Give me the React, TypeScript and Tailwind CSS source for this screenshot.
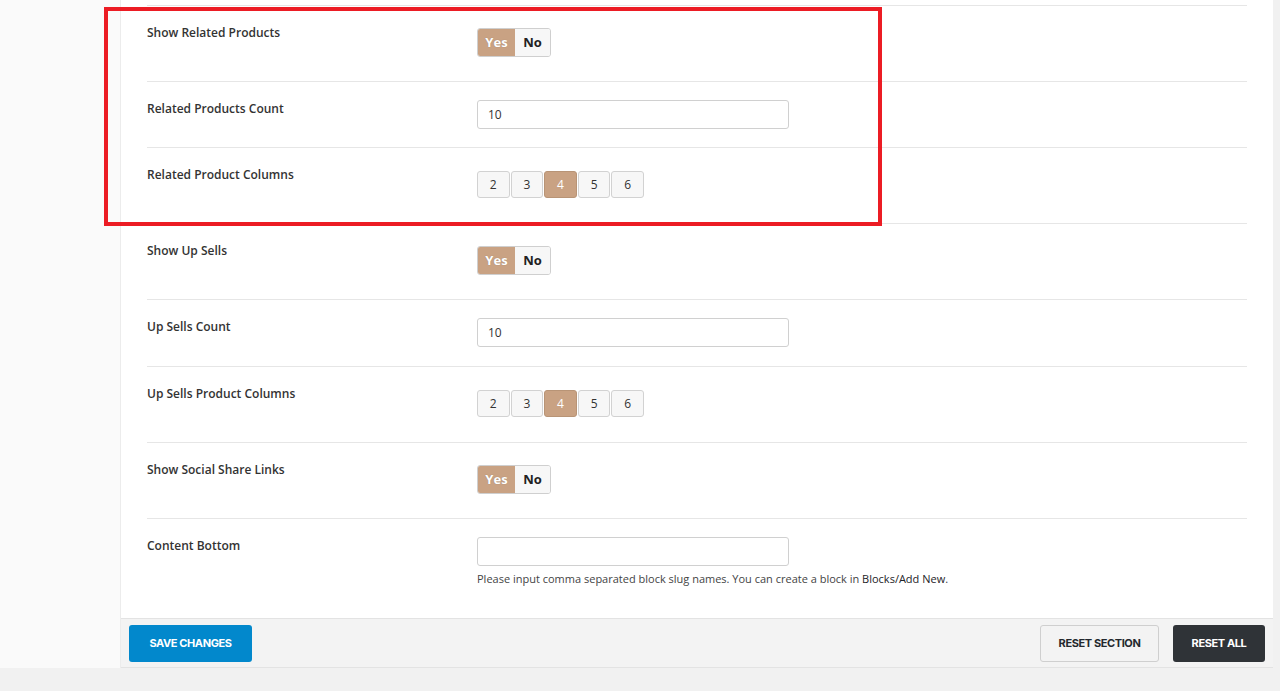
import React from "react";

const labelCls =
  "w-[330px] shrink-0 text-[12px] leading-[18px] font-semibold text-[#333] [font-family:'Open_Sans',sans-serif]";

function Toggle() {
  return (
    <div className="mt-[4px] flex h-[29px] w-fit overflow-hidden rounded-[3px] border border-[#cfcfcf] text-[13px] font-bold [font-family:'Open_Sans',sans-serif]">
      <div className="flex w-[37px] items-center justify-center bg-[#c9a283] text-white [text-shadow:0_0_1px_rgba(0,0,0,0.25)]">
        Yes
      </div>
      <div className="flex w-[35px] items-center justify-center bg-[#f7f7f7] text-[#222]">
        No
      </div>
    </div>
  );
}

function Columns() {
  const nums = [2, 3, 4, 5, 6];
  return (
    <div className="mt-[5px] flex gap-[1px] text-[12px] [font-family:'Open_Sans',sans-serif]">
      {nums.map((n) =>
        n === 4 ? (
          <div
            key={n}
            className="flex h-[27px] w-[32.6px] items-center justify-center rounded-[3px] border border-[#b89476] bg-[#c9a283] text-white"
          >
            {n}
          </div>
        ) : (
          <div
            key={n}
            className="flex h-[27px] w-[32.6px] items-center justify-center rounded-[3px] border border-[#d2d2d2] bg-[#f7f7f7] text-[#333]"
          >
            {n}
          </div>
        )
      )}
    </div>
  );
}

function TextInput({ value }: { value: string }) {
  return (
    <div className="flex h-[29px] w-[312px] items-center rounded-[3px] border border-[#d0d0d0] bg-white px-[10px] text-[12px] text-[#333] [font-family:'Open_Sans',sans-serif]">
      {value}
    </div>
  );
}

function Row({
  label,
  h,
  children,
}: {
  label: string;
  h: string;
  children: React.ReactNode;
}) {
  return (
    <div className={`flex border-t border-[#e6e6e6] pt-[18px] ${h}`}>
      <div className={labelCls}>{label}</div>
      <div className="flex flex-col">{children}</div>
    </div>
  );
}

export default function App() {
  return (
    <div className="relative flex h-[691px] w-full flex-col overflow-hidden bg-[#f1f1f1]">
      <div className="flex h-[668px] shrink-0">
        <div className="w-[121px] shrink-0 border-r border-[#ececec] bg-[#fafafa]" />
        <div className="flex flex-1 flex-col bg-white">
          <div className="flex-1 px-[26px] pt-[5px]">
            <Row label="Show Related Products" h="h-[76px]">
              <Toggle />
            </Row>
            <Row label="Related Products Count" h="h-[66px]">
              <TextInput value="10" />
            </Row>
            <Row label="Related Product Columns" h="h-[76px]">
              <Columns />
            </Row>
            <Row label="Show Up Sells" h="h-[76px]">
              <Toggle />
            </Row>
            <Row label="Up Sells Count" h="h-[67px]">
              <TextInput value="10" />
            </Row>
            <Row label="Up Sells Product Columns" h="h-[76px]">
              <Columns />
            </Row>
            <Row label="Show Social Share Links" h="h-[76px]">
              <Toggle />
            </Row>
            <Row label="Content Bottom" h="h-[100px]">
              <TextInput value="" />
              <div className="mt-[5px] text-[11px] leading-[16px] text-[#444] [font-family:'Open_Sans',sans-serif]">
                Please input comma separated block slug names. You can create a block in{" "}
                <span className="text-[#1d2327]">Blocks/Add New</span>.
              </div>
            </Row>
          </div>
          <div className="flex h-[50px] shrink-0 items-center justify-between border-t border-b border-[#e3e3e3] bg-[#f3f3f3] px-[8px] pt-[1px]">
            <button className="h-[37px] w-[123px] rounded-[3px] bg-[#0288cc] text-[11px] font-bold tracking-[-0.4px] text-white [font-family:Inter,sans-serif]">
              SAVE CHANGES
            </button>
            <div className="flex gap-[14px]">
              <button className="h-[37px] w-[119px] rounded-[3px] border border-[#cfcfcf] bg-[#f3f3f3] text-[11px] font-bold tracking-[-0.4px] text-[#23282d] [font-family:Inter,sans-serif]">
                RESET SECTION
              </button>
              <button className="h-[37px] w-[92px] rounded-[3px] bg-[#2f3337] text-[11px] font-bold tracking-[-0.4px] text-white [font-family:Inter,sans-serif]">
                RESET ALL
              </button>
            </div>
          </div>
        </div>
        <div className="w-[7px] shrink-0 bg-[#f1f1f1]" />
      </div>
      <div className="pointer-events-none absolute left-[104px] top-[7px] h-[219px] w-[778px] border-[4px] border-[#ec1c24]" />
    </div>
  );
}
